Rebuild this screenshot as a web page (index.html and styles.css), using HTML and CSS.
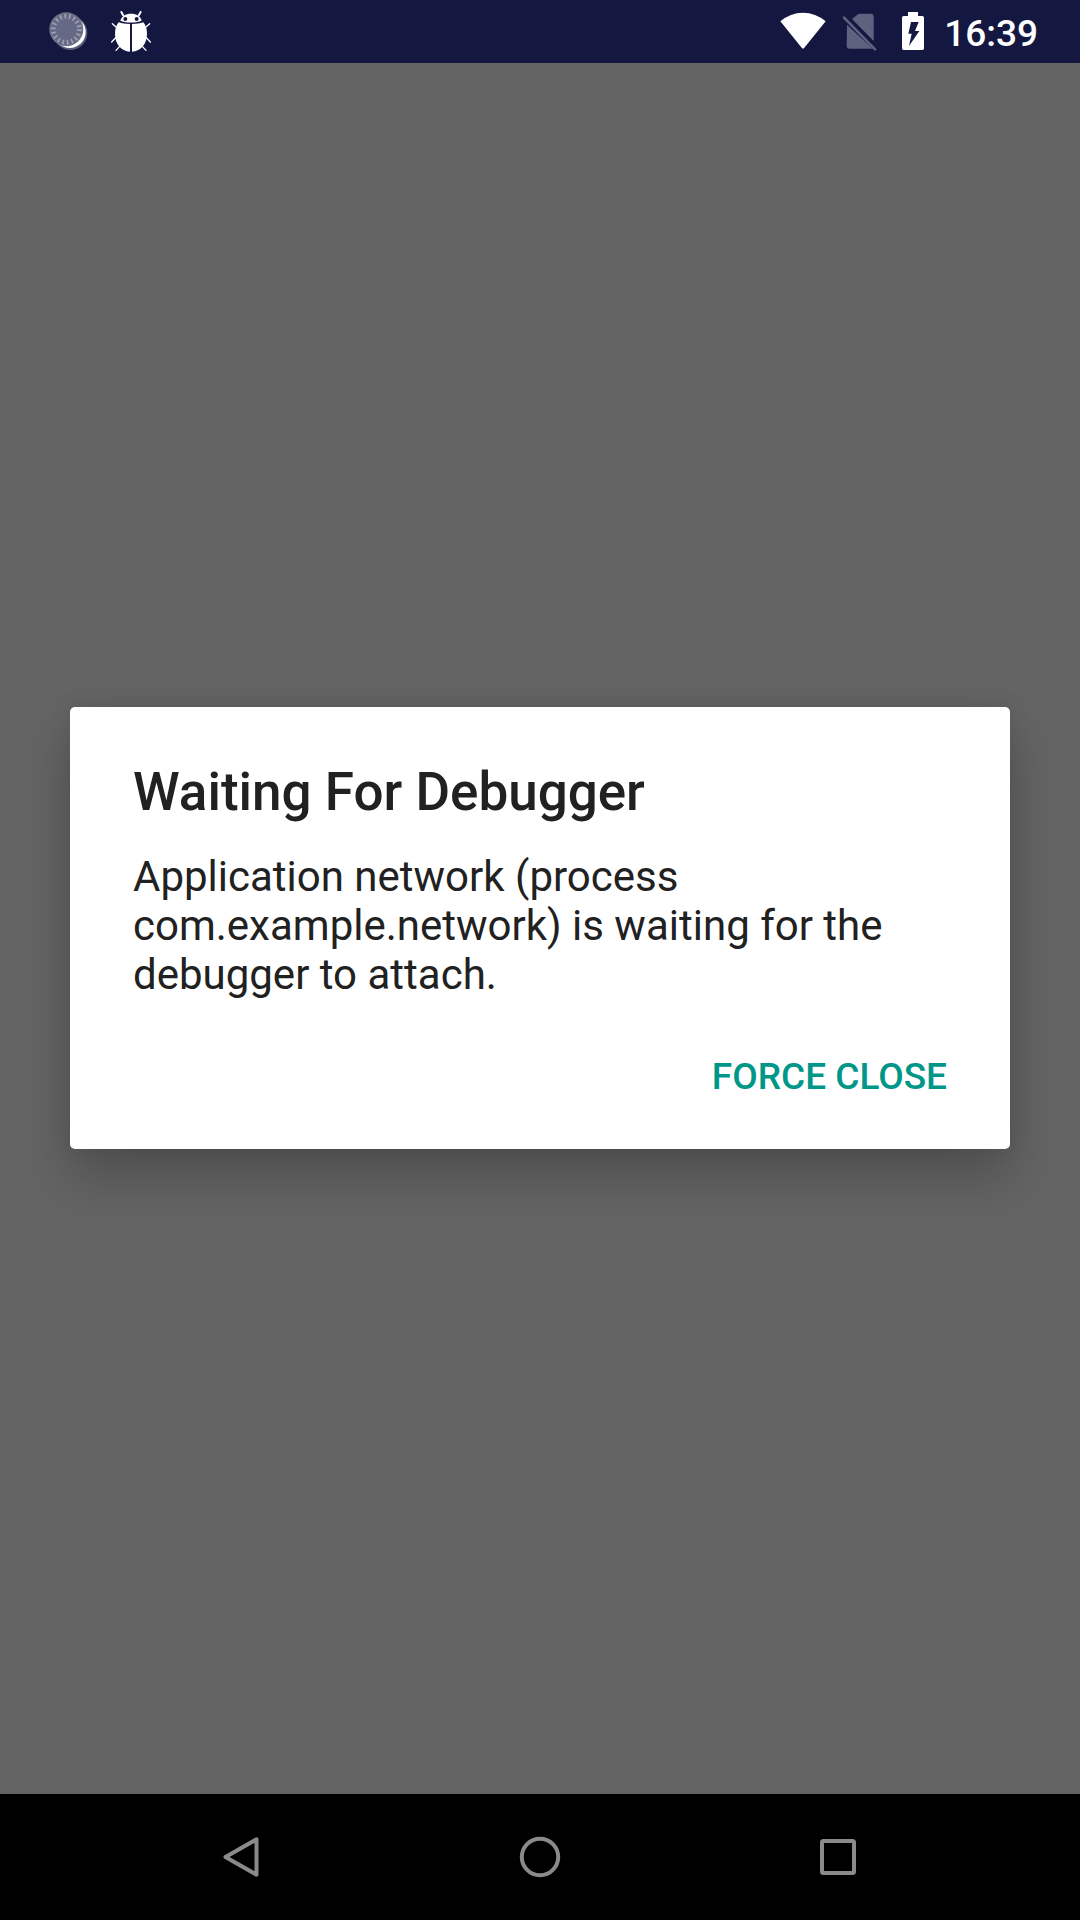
FILE: index.html
```html
<!DOCTYPE html>
<html lang="en">
<head>
<meta charset="utf-8">
<title>Waiting For Debugger</title>
<link rel="stylesheet" href="styles.css">
</head>
<body>
<div class="screen">
  <header class="status-bar">
    <div class="notifications">
      <svg class="icon-spinner" viewBox="0 0 120 120" aria-hidden="true">
        <circle cx="67" cy="66" r="51" fill="#fff" fill-opacity=".3"/>
        <circle cx="65" cy="63" r="48" fill="#fff"/>
        <circle cx="55" cy="55" r="51" fill="#707389"/>
        <circle cx="55" cy="55" r="47" fill="#666985"/>
        <circle cx="55" cy="55" r="39" fill="none" stroke="#9fa1b2" stroke-width="14" stroke-dasharray="5 8.610"/>
      </svg>
      <svg class="icon-bug" viewBox="0 0 120 128" aria-hidden="true">
        <path d="M36 12l-5-9M84 12l5-9" fill="none" stroke="#fff" stroke-width="6" stroke-linecap="round"/>
        <path d="M16 49L4 38M14 80L2 93M26 106L15 118M104 49l12-11M106 80l12 13M94 106l11 12" fill="none" stroke="#fff" stroke-width="4" stroke-linecap="round"/>
        <path d="M28 29C32 15 43 8 60 8s28 7 32 21C80 36 40 36 28 29Z" fill="#fff"/>
        <path d="M57 39v83C30 120 12 99 12 68c0-15 4-25 11-34 10 4 20 5 34 5Z" fill="#fff"/>
        <path d="M63 39v83c27-2 45-23 45-54 0-15-4-25-11-34-10 4-20 5-34 5Z" fill="#fff"/>
        <circle cx="43" cy="24" r="6" fill="#141840"/>
        <circle cx="77" cy="24" r="6" fill="#141840"/>
      </svg>
    </div>
    <div class="system">
      <svg class="icon-wifi" viewBox="0 0 138 111" aria-hidden="true">
        <path d="M1 28Q31 2 69 2t68 26L73 107q-4 5-8 0Z" fill="#fff"/>
      </svg>
      <svg class="icon-sim" viewBox="0 0 104 114" aria-hidden="true">
        <path d="M30 18L46 5q3-3 7-3h33q9 0 9 9v73Z M15 35l77 72H23q-9 0-9-9Z" fill="#5f627e"/>
        <path d="M6 14l93 95" stroke="#5f627e" stroke-width="8" stroke-linecap="round"/>
      </svg>
      <svg class="icon-battery" viewBox="0 0 66 114" aria-hidden="true">
        <path d="M18 0h30v12h13q5 0 5 5v92q0 5-5 5H5q-5 0-5-5V17q0-5 5-5h13Z" fill="#fff"/>
        <path d="M27 30h23L39 57h13L21 102l8-37H19Z" fill="#141840"/>
      </svg>
      <time class="clock">16:39</time>
    </div>
  </header>

  <main class="backdrop">
    <section class="dialog" role="alertdialog">
      <h1 class="dialog-title">Waiting For Debugger</h1>
      <p class="dialog-message">Application network (process com.example.network) is waiting for the debugger to attach.</p>
      <div class="dialog-actions">
        <button class="dialog-button" type="button">FORCE CLOSE</button>
      </div>
    </section>
  </main>

  <nav class="nav-bar">
    <svg class="nav-icon" viewBox="0 0 48 48" aria-hidden="true"><path d="M38.500 6.300V41.700L7.500 24Z"/></svg>
    <svg class="nav-icon" viewBox="0 0 48 48" aria-hidden="true"><circle cx="24" cy="24" r="18.200"/></svg>
    <svg class="nav-icon" viewBox="0 0 48 48" aria-hidden="true"><rect x="8" y="8" width="32" height="32" rx="1.500"/></svg>
  </nav>
</div>
</body>
</html>
```
FILE: styles.css
```css
* {
  box-sizing: border-box;
}

body {
  margin: 0;
  font-family: Roboto, "Noto Sans", sans-serif;
}

.screen {
  display: flex;
  flex-direction: column;
  width: 1080px;
  height: 1920px;
  overflow: hidden;
  background: #646464;
}

.status-bar {
  display: flex;
  justify-content: space-between;
  height: 63px;
  padding: 0 42px 0 48px;
  background: #141840;
}

.notifications,
.system {
  display: flex;
  align-items: flex-start;
}

.icon-spinner {
  width: 40px;
  height: 40px;
  margin-top: 11px;
}

.icon-bug {
  width: 40px;
  height: 42.700px;
  margin: 10.500px 0 0 23px;
}

.icon-wifi {
  width: 46px;
  height: 37px;
  margin-top: 12.300px;
}

.icon-sim {
  width: 34.700px;
  height: 38px;
  margin: 13.300px 0 0 16px;
}

.icon-battery {
  width: 22px;
  height: 38px;
  margin: 12px 0 0 25px;
}

.clock {
  margin: 12px 0 0 20.500px;
  font-size: 37px;
  line-height: 43px;
  font-weight: 500;
  color: #fff;
}

.backdrop {
  flex: 1;
  padding: 644px 70px 0;
}

.dialog {
  height: 442px;
  padding: 54px 63px 0;
  border-radius: 5px;
  background: #fff;
  color: #212121;
  box-shadow: 0 29px 52px rgba(0, 0, 0, .21), 0 0 22px rgba(0, 0, 0, .08);
}

.dialog-title {
  margin: 0;
  font-size: 53px;
  line-height: 62px;
  font-weight: 500;
}

.dialog-message {
  margin: 29px 0 0;
  font-size: 42px;
  line-height: 49px;
}

.dialog-actions {
  display: flex;
  justify-content: flex-end;
  margin-top: 56px;
}

.dialog-button {
  padding: 0;
  border: 0;
  background: none;
  font: 500 37px/43px Roboto, "Noto Sans", sans-serif;
  color: #009688;
}

.nav-bar {
  display: flex;
  justify-content: center;
  align-items: center;
  gap: 250px;
  height: 126px;
  background: #000;
}

.nav-icon {
  width: 48px;
  height: 48px;
  fill: none;
  stroke: #8a8a8a;
  stroke-width: 4;
  stroke-linejoin: round;
}
```
